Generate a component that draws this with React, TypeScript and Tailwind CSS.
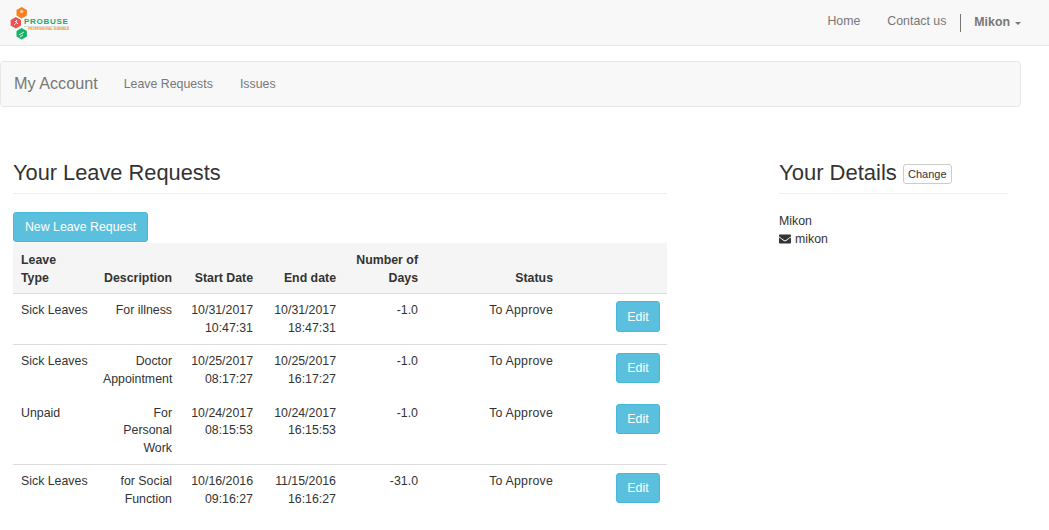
import { FaEnvelope } from "react-icons/fa";

const rows = [
  { type: "Sick Leaves", desc: ["For illness"], start: ["10/31/2017", "10:47:31"], end: ["10/31/2017", "18:47:31"], days: "-1.0", rule: true },
  { type: "Sick Leaves", desc: ["Doctor", "Appointment"], start: ["10/25/2017", "08:17:27"], end: ["10/25/2017", "16:17:27"], days: "-1.0", rule: false },
  { type: "Unpaid", desc: ["For", "Personal", "Work"], start: ["10/24/2017", "08:15:53"], end: ["10/24/2017", "16:15:53"], days: "-1.0", rule: true },
  { type: "Sick Leaves", desc: ["for Social", "Function"], start: ["10/16/2016", "09:16:27"], end: ["11/15/2016", "16:16:27"], days: "-31.0", rule: false },
];

const Lines = ({ lines }: { lines: string[] }) => (
  <>
    {lines.map((l) => (
      <div key={l}>{l}</div>
    ))}
  </>
);

// logo: three hexagons and the small wordmark, placed over each other
const Logo = () => (
  <div className="relative w-[70px] h-[45px]">
    <svg width="30" height="45" viewBox="0 0 30 45" className="absolute left-0 top-0">
      <polygon points="21.7,7 26.9,10 26.9,15.5 21.7,18.5 16.5,15.5 16.5,10" fill="#f58220" />
      <polygon points="15.8,17 21,20 21,25.5 15.8,28.5 10.6,25.5 10.6,20" fill="#ef5350" />
      <polygon points="21.7,28 26.9,31 26.9,36.5 21.7,39.5 16.5,36.5 16.5,31" fill="#17b169" />
      <circle cx="21.7" cy="11.5" r="1.7" fill="#fbc58f" />
      <path d="M14 25c2-1 3-3 2.5-5M15 21l3 3" fill="none" stroke="#fde3e2" strokeWidth="1" />
      <path d="M19 35l5-3M20 37l3-2" stroke="#d5f5e5" strokeWidth="1" />
    </svg>
    <span className="absolute left-[24px] top-[17px] text-[8px] leading-[9px] font-bold tracking-[0.7px] text-[#17a974]">PROBUSE</span>
    <div className="absolute left-[24px] top-[26px] w-[45px] h-px bg-[#ddd]" />
    <span className="absolute left-[28px] top-[27px] text-[3.6px] leading-[4px] font-bold tracking-[-0.3px] whitespace-nowrap text-[#f59a3a]">PROFESSIONAL SUBSIBLE</span>
  </div>
);

export default function App() {
  return (
    <div className="min-h-screen bg-white text-[12.35px] leading-[17.6px] text-[#333] font-['Liberation_Sans',sans-serif]">
      <nav className="h-[46px] bg-[#f8f8f8] border-b border-[#e7e7e7] flex items-center justify-between pr-[28px]">
        <Logo />
        <div className="flex items-center text-[#777]">
          <a className="mr-[27px] -mt-[1px]">Home</a>
          <a className="mr-[14px] -mt-[1px]">Contact us</a>
          <div className="w-px h-[18px] bg-[#777] mr-[13px]" />
          <a className="font-bold flex items-center">
            Mikon
            <span className="ml-[5px] mt-[2px] border-x-[3px] border-t-[3px] border-x-transparent border-t-[#777]" />
          </a>
        </div>
      </nav>

      <div className="mt-[15px] mr-[28px] h-[46px] bg-[#f8f8f8] border border-[#e7e7e7] rounded flex items-center pl-[13px] text-[#777]">
        <span className="text-[16.2px] mr-[26px]">My Account</span>
        <a className="mr-[27px] mt-[1px]">Leave Requests</a>
        <a className="mt-[1px]">Issues</a>
      </div>

      <div className="flex pl-[13px] mt-[50px]">
        <div className="w-[654px]">
          <div className="h-[37px] border-b border-[#eee] flex items-end pb-[8px]">
            <h2 className="text-[21.8px] leading-[25px]">Your Leave Requests</h2>
          </div>
          <button className="mt-[18px] h-[30px] w-[135px] pt-px rounded-[3px] bg-[#5bc0de] border border-[#46b8da] text-white">New Leave Request</button>
          <table className="w-[654px] mt-px table-fixed border-collapse">
            <colgroup>
              <col className="w-[82px]" />
              <col className="w-[85px]" />
              <col className="w-[81px]" />
              <col className="w-[83px]" />
              <col className="w-[82px]" />
              <col className="w-[135px]" />
              <col />
            </colgroup>
            <thead>
              <tr className="bg-[#f5f5f5] border-b border-[#ddd] font-bold align-bottom">
                <th className="px-2 pt-[9px] pb-[6px] text-left font-bold">Leave<br />Type</th>
                <th className="px-2 pt-[9px] pb-[6px] text-right font-bold whitespace-nowrap">Description</th>
                <th className="px-2 pt-[9px] pb-[6px] text-right font-bold">Start Date</th>
                <th className="px-2 pt-[9px] pb-[6px] text-right font-bold">End date</th>
                <th className="px-2 pt-[9px] pb-[6px] text-right font-bold">Number of<br />Days</th>
                <th className="px-2 pt-[9px] pb-[6px] text-right font-bold">Status</th>
                <th />
              </tr>
            </thead>
            <tbody>
              {rows.map((r) => (
                <tr key={r.start[0]} className={r.rule ? "border-b border-[#ddd] align-top" : "border-b border-transparent align-top"}>
                  <td className="px-2 pt-2 pb-[7px] whitespace-nowrap">{r.type}</td>
                  <td className="px-2 pt-2 pb-[7px] text-right"><Lines lines={r.desc} /></td>
                  <td className="px-2 pt-2 pb-[7px] text-right"><Lines lines={r.start} /></td>
                  <td className="px-2 pt-2 pb-[7px] text-right"><Lines lines={r.end} /></td>
                  <td className="px-2 pt-2 pb-[7px] text-right">{r.days}</td>
                  <td className="px-2 pt-2 pb-[7px] text-right whitespace-nowrap tracking-[0.2px]">To Approve</td>
                  <td className="pt-[7.2px] pr-[7px] pb-[7px] text-right">
                    <button className="h-[30.5px] w-[44px] pt-[2px] rounded-[3px] bg-[#5bc0de] border border-[#46b8da] text-white">Edit</button>
                  </td>
                </tr>
              ))}
            </tbody>
          </table>
        </div>

        <div className="ml-[112px] w-[229px]">
          <div className="h-[37px] border-b border-[#eee] flex items-end pb-[8px]">
            <h2 className="text-[22px] leading-[25px]">Your Details</h2>
            <button className="ml-[6px] mb-[1px] h-[20px] w-[49px] rounded-[3px] bg-white border border-[#ccc] text-[11px] leading-[16px]">Change</button>
          </div>
          <div className="mt-[19px]">Mikon</div>
          <div className="flex items-center">
            <FaEnvelope size={12} className="mr-[4px]" />
            mikon
          </div>
        </div>
      </div>
    </div>
  );
}
